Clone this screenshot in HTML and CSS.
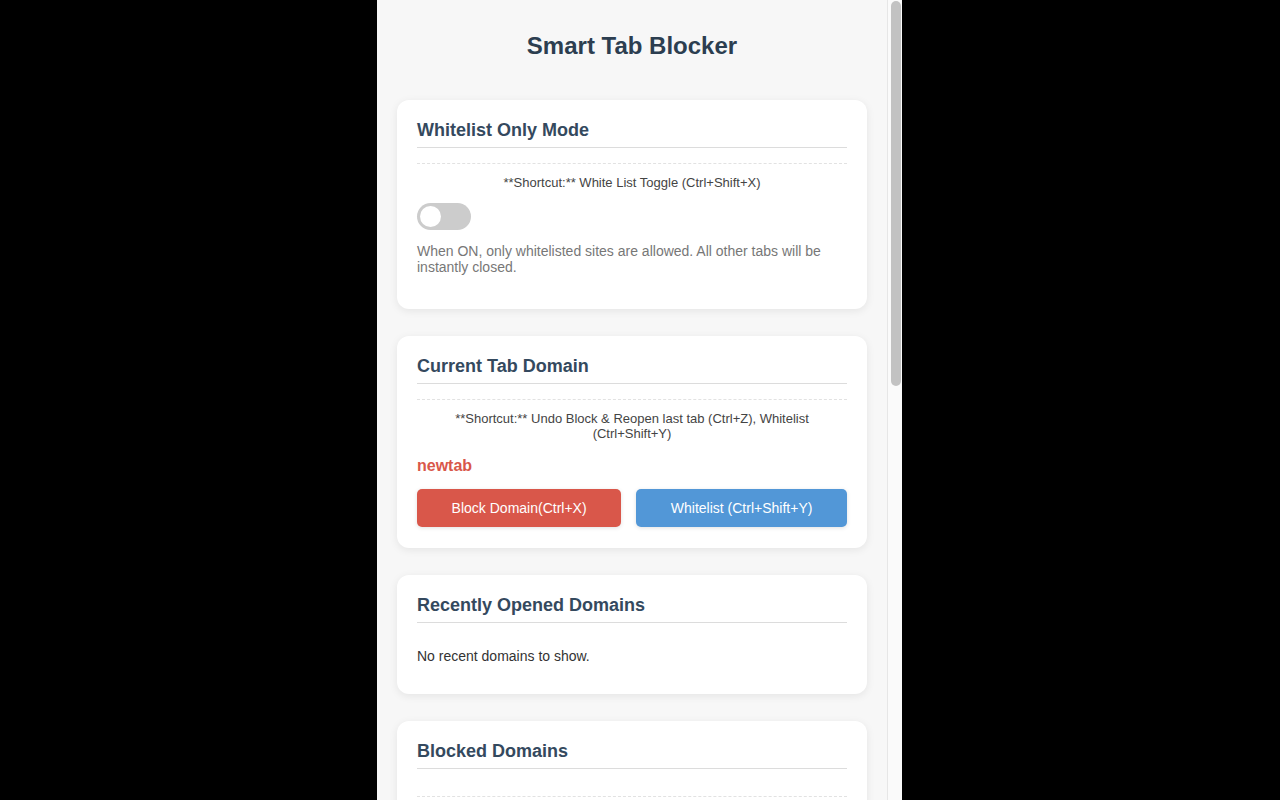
FILE: index.html
```html
<!DOCTYPE html>
<html lang="en">
<head>
<meta charset="utf-8">
<title>Smart Tab Blocker</title>
<link rel="stylesheet" href="styles.css">
</head>
<body>
<div class="frame">
  <div class="panel">
    <h1 class="title">Smart Tab Blocker</h1>

    <section class="card">
      <h2 class="card-title">Whitelist Only Mode</h2>
      <div class="section">
        <p class="shortcut">**Shortcut:** White List Toggle (Ctrl+Shift+X)</p>
        <div class="toggle"><span class="knob"></span></div>
        <p class="desc">When ON, only whitelisted sites are allowed. All other tabs will be instantly closed.</p>
      </div>
    </section>

    <section class="card">
      <h2 class="card-title">Current Tab Domain</h2>
      <div class="section">
        <p class="shortcut">**Shortcut:** Undo Block &amp; Reopen last tab (Ctrl+Z), Whitelist (Ctrl+Shift+Y)</p>
        <p class="domain">newtab</p>
        <div class="buttons">
          <button class="btn btn-block">Block Domain(Ctrl+X)</button>
          <button class="btn btn-white">Whitelist (Ctrl+Shift+Y)</button>
        </div>
      </div>
    </section>

    <section class="card">
      <h2 class="card-title">Recently Opened Domains</h2>
      <p class="empty">No recent domains to show.</p>
    </section>

    <section class="card">
      <h2 class="card-title">Blocked Domains</h2>
      <div class="section section-spaced"></div>
    </section>
  </div>
  <div class="scrollbar"><div class="thumb"></div></div>
</div>
</body>
</html>
```

FILE: styles.css
```css
* { box-sizing: border-box; }
html, body { margin: 0; padding: 0; height: 100%; }
body {
  background: #000;
  font-family: "Liberation Sans", Arial, Helvetica, sans-serif;
  overflow: hidden;
}
.frame {
  width: 525px;
  height: 800px;
  margin-left: 377px;
  display: flex;
  background: #f7f7f7;
  overflow: hidden;
}
.panel {
  width: 510px;
  padding: 32px 20px 0 20px;
  overflow: hidden;
}
.scrollbar {
  width: 15px;
  height: 800px;
  background: #fafafa;
  border-left: 1px solid #e6e6e6;
  padding: 1px 1px 0 3px;
}
.thumb {
  width: 10px;
  height: 385px;
  background: #c2c2c2;
  border-radius: 5px;
}
.title {
  margin: 0 0 40px;
  font-size: 24px;
  line-height: 28px;
  font-weight: bold;
  text-align: center;
  color: #2c3e50;
}
.card {
  background: #fff;
  border-radius: 12px;
  box-shadow: 0 2px 8px rgba(0, 0, 0, 0.08);
  padding: 20px;
  margin-bottom: 27px;
}
.card-title {
  margin: 0 0 15px;
  font-size: 18px;
  line-height: 21px;
  font-weight: bold;
  color: #34495e;
  padding-bottom: 6px;
  border-bottom: 1px solid #dcdcdc;
}
.section {
  border-top: 1px dashed #e2e2e2;
  padding-top: 11px;
}
.section-spaced {
  margin-top: 27px;
  height: 60px;
}
.shortcut {
  margin: 0;
  font-size: 13px;
  line-height: 15.6px;
  color: #444;
  text-align: center;
}
.toggle {
  margin-top: 12px;
  width: 54px;
  height: 27px;
  border-radius: 14px;
  background: #cccccc;
  padding: 3px;
}
.knob {
  display: block;
  width: 21px;
  height: 21px;
  border-radius: 50%;
  background: #fff;
}
.desc {
  margin: 13px 0 14px;
  font-size: 14px;
  line-height: 16px;
  color: #777;
}
.domain {
  margin: 15px 0 14px;
  font-size: 16px;
  line-height: 18px;
  font-weight: bold;
  color: #d9574a;
}
.buttons {
  display: flex;
  gap: 15px;
  margin-bottom: 1px;
}
.btn {
  flex: 1 1 auto;
  height: 38px;
  border: none;
  border-radius: 5px;
  color: #fff;
  font-family: "Liberation Sans", Arial, Helvetica, sans-serif;
  font-size: 14px;
  box-shadow: 0 1px 4px rgba(0, 0, 0, 0.12);
  cursor: pointer;
}
.btn-block { background: #d9574a; }
.btn-white { background: #5297d7; }
.empty {
  margin: 25px 0 10px;
  font-size: 14px;
  line-height: 16px;
  color: #333;
}
```
